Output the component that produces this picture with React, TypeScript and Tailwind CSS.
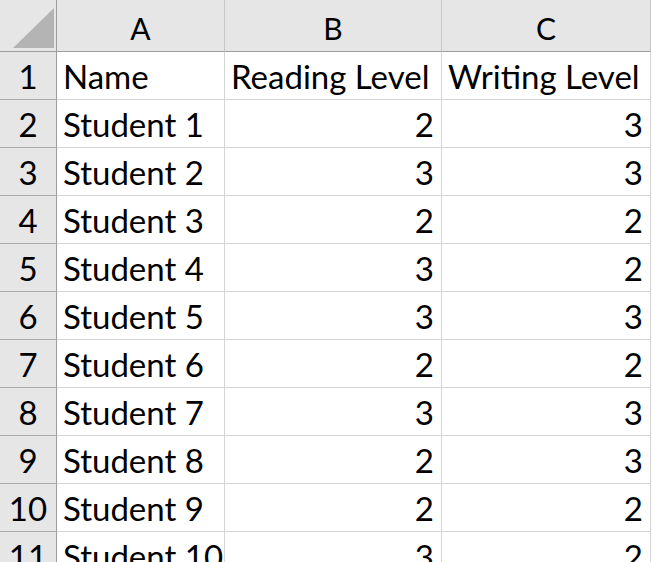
import React from 'react';

const rows: [string, number, number][] = [
  ['Student 1', 2, 3],
  ['Student 2', 3, 3],
  ['Student 3', 2, 2],
  ['Student 4', 3, 2],
  ['Student 5', 3, 3],
  ['Student 6', 2, 2],
  ['Student 7', 3, 3],
  ['Student 8', 2, 3],
  ['Student 9', 2, 2],
  ['Student 10', 3, 2],
];

const font = { fontFamily: 'Lato, "Open Sans", sans-serif' };

function RowHead({ n }: { n: number }) {
  return (
    <div className="h-[48px] bg-[#e6e6e6] border-r border-b border-r-[#9e9e9e] border-b-[#ababab] flex items-end justify-center pb-[6px] text-[33px] leading-none text-black">
      {n}
    </div>
  );
}

function Cell({ children, right }: { children: React.ReactNode; right?: boolean }) {
  return (
    <div
      className={
        'h-[48px] bg-white border-r border-b border-[#d4d4d4] flex items-end pb-[6px] text-[33px] leading-none text-black whitespace-nowrap ' +
        (right ? 'justify-end pr-[7px]' : 'pl-[6px]')
      }
    >
      {children}
    </div>
  );
}

export default function App() {
  return (
    <div className="w-[652px] h-[562px] overflow-hidden bg-white" style={font}>
      <div className="grid grid-cols-[57px_168px_217px_209px]">
        {/* Column headers */}
        <div className="h-[52px] bg-[#e6e6e6] border-r border-b border-r-[#9e9e9e] border-b-[#9e9e9e] flex items-end justify-end pr-[2px] pb-[3px]">
          <svg width="41" height="40" viewBox="0 0 41 40">
            <polygon points="41,0 41,40 0,40" fill="#b4b4b4" />
          </svg>
        </div>
        {['A', 'B', 'C'].map(c => (
          <div
            key={c}
            className="h-[52px] bg-[#e6e6e6] border-r border-b border-r-[#c6c6c6] border-b-[#9e9e9e] flex items-end justify-center pb-[8px] text-[30px] leading-none text-black"
          >
            {c}
          </div>
        ))}

        {/* Header row */}
        <RowHead n={1} />
        <Cell>Name</Cell>
        <Cell>Reading Level</Cell>
        <Cell>Writing Level</Cell>

        {rows.map(([name, r, w], i) => (
          <React.Fragment key={name}>
            <RowHead n={i + 2} />
            <Cell>{name}</Cell>
            <Cell right>{r}</Cell>
            <Cell right>{w}</Cell>
          </React.Fragment>
        ))}
      </div>
    </div>
  );
}
